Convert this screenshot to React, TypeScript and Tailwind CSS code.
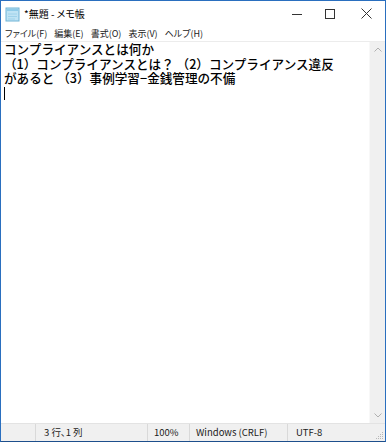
const jp = { fontFamily: '"Noto Sans CJK JP", "Noto Sans", sans-serif' };
const ui = { fontFamily: '"Noto Sans CJK JP", "Liberation Sans", sans-serif', fontFeatureSettings: '"palt"' };

function NotepadIcon() {
  return (
    <svg width="15" height="15" viewBox="0 0 15 15">
      <rect x="1" y="1" width="13" height="13" fill="#bfe3f4" stroke="#6fb3d6" />
      <rect x="2" y="2" width="11" height="2" fill="#8fcbe8" />
      <path d="M3 7h9M3 9.5h9M3 12h7" stroke="#9fd2ea" strokeWidth="1" />
    </svg>
  );
}

export default function App() {
  const menus = ['ファイル(F)', '編集(E)', '書式(O)', '表示(V)', 'ヘルプ(H)'];
  return (
    <div className="w-[386px] h-[442px] bg-white border border-[#2a6fbf] border-b-[#1d4f8c] flex flex-col overflow-hidden">
      {/* title bar */}
      <div className="h-[25px] flex items-center shrink-0">
        <div className="pl-[4px] pt-[1px] flex items-center">
          <NotepadIcon />
        </div>
        <span className="ml-[4px] text-[10px] text-black" style={ui}>*無題 - メモ帳</span>
        <div className="ml-auto flex items-center h-full">
          <div className="w-[32px] h-full flex items-center justify-center">
            <svg width="10" height="10" viewBox="0 0 10 10"><path d="M0 5.5h10" stroke="#333" /></svg>
          </div>
          <div className="w-[34px] h-full flex items-center justify-center">
            <svg width="10" height="10" viewBox="0 0 10 10"><rect x="0.5" y="0.5" width="9" height="9" fill="none" stroke="#333" /></svg>
          </div>
          <div className="w-[38px] h-full flex items-center justify-center">
            <svg width="11" height="11" viewBox="0 0 11 11"><path d="M0.5 0.5l10 10M10.5 0.5l-10 10" stroke="#333" /></svg>
          </div>
        </div>
      </div>
      {/* menu bar */}
      <div className="h-[16px] flex items-center gap-[7px] pl-[4px] text-[9px] text-[#222] border-b border-[#ececec] shrink-0" style={ui}>
        {menus.map((m) => (
          <span key={m}>{m}</span>
        ))}
      </div>
      {/* edit area */}
      <div className="flex-1 flex min-h-0">
        <div className="flex-1 pl-[3px] text-[12.6px] leading-[14.5px] text-black font-medium whitespace-pre" style={jp}>
          <div>コンプライアンスとは何か</div>
          <div>（1）コンプライアンスとは？ （2）コンプライアンス違反</div>
          <div>があると （3）事例学習−金銭管理の不備</div>
          <div className="w-[1px] h-[13px] bg-black mt-[1px]" />
        </div>
        <div className="w-[16px] bg-[#f0f0f0] border-l border-[#f8f8f8] flex flex-col justify-between items-center py-[5px]">
          <svg width="8" height="5" viewBox="0 0 8 5"><path d="M0.5 4.5l3.5-3.5 3.5 3.5" fill="none" stroke="#b0b0b0" /></svg>
          <svg width="8" height="5" viewBox="0 0 8 5"><path d="M0.5 0.5l3.5 3.5 3.5-3.5" fill="none" stroke="#b0b0b0" /></svg>
        </div>
      </div>
      {/* status bar */}
      <div className="h-[18px] bg-[#f0f0f0] border-t border-[#e3e3e3] flex items-center text-[9.5px] text-[#222] shrink-0 relative" style={ui}>
        <div className="w-[35px] h-full border-r border-[#d9d9d9]" />
        <div className="w-[112px] h-full border-r border-[#d9d9d9] pl-[8px] flex items-center">3 行、1 列</div>
        <div className="w-[42px] h-full border-r border-[#d9d9d9] pl-[6px] flex items-center">100%</div>
        <div className="w-[98px] h-full border-r border-[#d9d9d9] pl-[6px] flex items-center">Windows (CRLF)</div>
        <div className="pl-[8px] flex items-center">UTF-8</div>
        <svg className="absolute right-[1px] bottom-[1px]" width="10" height="10" viewBox="0 0 10 10">
          <g fill="#b8b8b8">
            <rect x="8" y="2" width="1" height="1" />
            <rect x="6" y="4" width="1" height="1" />
            <rect x="8" y="4" width="1" height="1" />
            <rect x="4" y="6" width="1" height="1" />
            <rect x="6" y="6" width="1" height="1" />
            <rect x="8" y="6" width="1" height="1" />
            <rect x="2" y="8" width="1" height="1" />
            <rect x="4" y="8" width="1" height="1" />
            <rect x="6" y="8" width="1" height="1" />
            <rect x="8" y="8" width="1" height="1" />
          </g>
        </svg>
      </div>
    </div>
  );
}
